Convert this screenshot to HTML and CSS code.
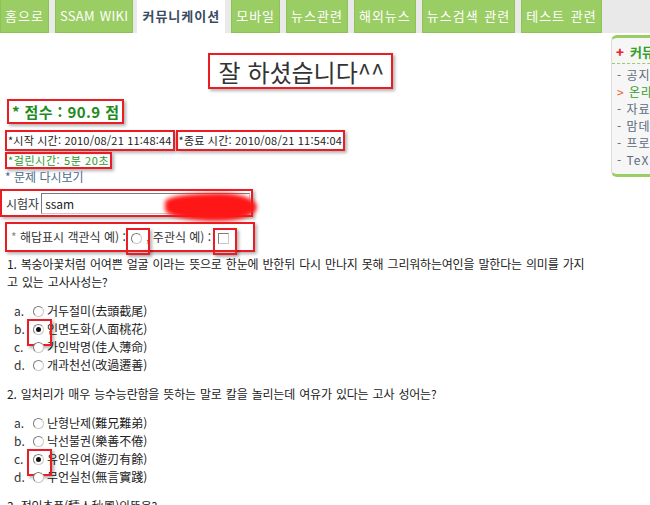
FILE: index.html
```html
<!DOCTYPE html>
<html lang="ko">
  <head>
    <meta charset="utf-8" />
    <title>온라인 시험 결과</title>
    <link rel="stylesheet" href="styles.css">
  </head>
  <body>
    <nav class="tabs">
      <a class="tab">홈으로</a>
      <a class="tab latin">SSAM WIKI</a>
      <a class="tab active">커뮤니케이션</a>
      <a class="tab">모바일</a>
      <a class="tab">뉴스관련</a>
      <a class="tab">해외뉴스</a>
      <a class="tab">뉴스검색 관련</a>
      <a class="tab">테스트 관련</a>
    </nav>

    <div class="layout">
      <main class="content">
        <h1 class="title"><span class="mark">잘 하셨습니다^^</span></h1>

        <div class="score mark">* 점수 : 90.9 점</div>

        <div class="times">
          <span class="mark">*시작 시간: 2010/08/21 11:48:44</span>
          <span class="mark">*종료 시간: 2010/08/21 11:54:04</span>
        </div>
        <div class="elapsed mark">*걸린시간: 5분 20초</div>
        <a class="retry">* 문제 다시보기</a>

        <div class="tester mark">
          <label>시험자</label>
          <input type="text" value="ssam" />
          <span class="scribble"></span>
        </div>

        <div class="legend mark"><span class="star">*</span> 해답표시 객관식 예) : <i class="radio marked"></i>, 주관식 예) : <i class="check marked"></i></div>

        <div class="question first">
          <p>1. 복숭아꽃처럼 어여쁜 얼굴 이라는 뜻으로 한눈에 반한뒤 다시 만나지 못해 그리워하는여인을 말한다는 의미를 가지고 있는 고사사성는?</p>
          <ul class="choices">
            <li><span class="no">a.</span><i class="radio"></i>거두절미(去頭截尾)</li>
            <li><span class="no">b.</span><i class="radio checked marked"></i>인면도화(人面桃花)</li>
            <li><span class="no">c.</span><i class="radio"></i>가인박명(佳人薄命)</li>
            <li><span class="no">d.</span><i class="radio"></i>개과천선(改過遷善)</li>
          </ul>
        </div>

        <div class="question">
          <p>2. 일처리가 매우 능수능란함을 뜻하는 말로 칼을 놀리는데 여유가 있다는 고사 성어는?</p>
          <ul class="choices">
            <li><span class="no">a.</span><i class="radio"></i>난형난제(難兄難弟)</li>
            <li><span class="no">b.</span><i class="radio"></i>낙선불권(樂善不倦)</li>
            <li><span class="no">c.</span><i class="radio checked marked"></i>유인유여(遊刃有餘)</li>
            <li><span class="no">d.</span><i class="radio"></i>무언실천(無言實踐)</li>
          </ul>
        </div>

        <div class="question">
          <p>3. 적인추풍(積人秋風)의뜻은?</p>
        </div>
      </main>

      <aside class="side">
        <h3><b>+</b>커뮤니케이션</h3>
        <ul>
          <li>- 공지사항</li>
          <li class="current"><b>&gt;</b> 온라인 시험</li>
          <li>- 자료실</li>
          <li>- 맘데로 게시판</li>
          <li>- 프로그램</li>
          <li>- TeX</li>
        </ul>
      </aside>
    </div>
  </body>
</html>
```

FILE: styles.css
```css
* {
  padding: 0;
  margin: 0;
  box-sizing: border-box;
}
html,
body {
  overflow: hidden;
}
body {
  font-family: "Noto Sans CJK KR", "Noto Sans", sans-serif;
  font-size: 12px;
  color: #222222;
  background-color: #ffffff;
}

/* top tabs */
.tabs {
  display: flex;
  gap: 6px;
  height: 33px;
  background-color: #e9e9e9;
}
.tab {
  background-color: #9acd63;
  color: #ffffff;
  font-size: 13px;
  line-height: 32px;
  padding: 0 4px;
  letter-spacing: 1px;
  word-spacing: 1px;
  border: 1px solid #8dc255;
  border-top: none;
  white-space: nowrap;
}
.tab.latin {
  letter-spacing: 0.3px;
}
.tab.active {
  background-color: #ffffff;
  border-color: #ffffff;
  color: #3a4b60;
  font-weight: bold;
  letter-spacing: 1px;
  margin-left: -2px;
}

.layout {
  display: grid;
  grid-template-columns: 611px 150px;
}

/* red annotation boxes */
.mark {
  border: 2px solid #ea1c24;
  box-shadow: 2px 2px 3px rgba(0, 0, 0, 0.3);
}

.title {
  text-align: center;
  font-size: 24px;
  font-weight: normal;
  color: #333333;
  margin-top: 20px;
  line-height: 29px;
}
.title .mark {
  display: inline-block;
  padding: 2px 7px 1px 9px;
  margin-left: -10px;
}

.score {
  display: inline-block;
  margin: 10px 0 0 7px;
  padding: 1px 3px;
  font-size: 15px;
  line-height: 19px;
  font-weight: bold;
  letter-spacing: 0.4px;
  color: #1d8b1d;
}

.times {
  display: flex;
  gap: 1px;
  margin: 6px 0 0 5px;
  font-size: 11px;
  line-height: 15px;
  letter-spacing: 0.2px;
}
.times .mark {
  padding: 1px 1px;
}
.elapsed {
  display: inline-block;
  margin: -2px 0 0 5px;
  padding: 0 1px;
  font-size: 11px;
  line-height: 13px;
  letter-spacing: 0.6px;
  color: #2a9a2a;
}
.retry {
  display: block;
  margin-left: 5px;
  font-size: 12px;
  line-height: 16px;
  color: #4d6b8a;
}

.tester {
  position: relative;
  display: flex;
  align-items: center;
  gap: 2px;
  width: 253px;
  height: 28px;
  margin-top: 4px;
  padding: 0 1px 0 4px;
}
.tester label {
  color: #333333;
}
.tester input {
  flex: 1;
  height: 21px;
  border: 1px solid #7a7a7a;
  border-right-color: #c8c8c8;
  border-bottom-color: #c8c8c8;
  padding: 0 3px;
  font-family: inherit;
  font-size: 12px;
  color: #222222;
  outline: none;
}
.scribble {
  position: absolute;
  left: 163px;
  top: 2px;
  width: 92px;
  height: 28px;
  border-radius: 65% 45% 45% 65% / 35% 55% 55% 45%;
  background-color: #ff1717;
  filter: blur(2px);
}

.legend {
  width: 250px;
  height: 30px;
  margin: 5px 0 0 5px;
  padding-left: 4px;
  line-height: 26px;
  color: #333333;
  white-space: nowrap;
}
.legend .star {
  color: #888888;
}
.legend .radio {
  margin: 0 4px 0 2px;
}
.legend .check {
  margin: 0 0 0 3px;
}
.legend .marked::after {
  left: -6px;
  width: 20px;
}

/* form controls */
.radio,
.check {
  position: relative;
  display: inline-block;
  vertical-align: middle;
  width: 11px;
  height: 11px;
  background-color: #ffffff;
  border: 1px solid #c9c9c9;
  border-top-color: #7c7c7c;
  border-left-color: #7c7c7c;
}
.radio {
  border-radius: 50%;
}
.radio.checked::before {
  content: "";
  position: absolute;
  left: 2px;
  top: 2px;
  width: 5px;
  height: 5px;
  border-radius: 50%;
  background-color: #111111;
}
.marked::after {
  content: "";
  position: absolute;
  left: -7px;
  top: -6px;
  width: 21px;
  height: 23px;
  border: 2px solid #ea1c24;
  box-shadow: 2px 2px 3px rgba(0, 0, 0, 0.3);
}

/* questions */
.question {
  margin-top: 11px;
  padding-left: 7px;
  color: #222222;
}
.question.first {
  margin-top: 3px;
}
.question p {
  width: 585px;
  line-height: 18px;
  letter-spacing: -0.2px;
  word-spacing: 1px;
}
.choices {
  list-style: none;
  margin-top: 11px;
}
.choices li {
  display: flex;
  align-items: center;
  line-height: 18px;
}
.choices .no {
  width: 20px;
  padding-left: 7px;
  color: #333333;
}
.choices .radio {
  margin: 0 3px 0 6px;
}

/* right side menu */
.side {
  margin-top: 2px;
  align-self: start;
  background-color: #f6f6f6;
  border-top: 3px solid #9acd63;
  border-bottom: 3px solid #9acd63;
  border-left: 1px solid #dcdcdc;
  border-radius: 6px 0 0 6px;
  padding-bottom: 6px;
}
.side h3 {
  margin-top: 4px;
  padding: 0 0 1px 4px;
  font-size: 13px;
  line-height: 20px;
  color: #33a02c;
  border-bottom: 1px dashed #9acd63;
  white-space: nowrap;
}
.side h3 b {
  color: #e8222a;
  margin-right: 6px;
}
.side ul {
  list-style: none;
  padding-top: 2px;
}
.side li {
  font-size: 12px;
  line-height: 17px;
  padding-left: 5px;
  letter-spacing: 1px;
  color: #5b6b7d;
  white-space: nowrap;
}
.side li.current {
  color: #33a02c;
}
.side li.current b {
  color: #f05a28;
  font-weight: normal;
}
```
